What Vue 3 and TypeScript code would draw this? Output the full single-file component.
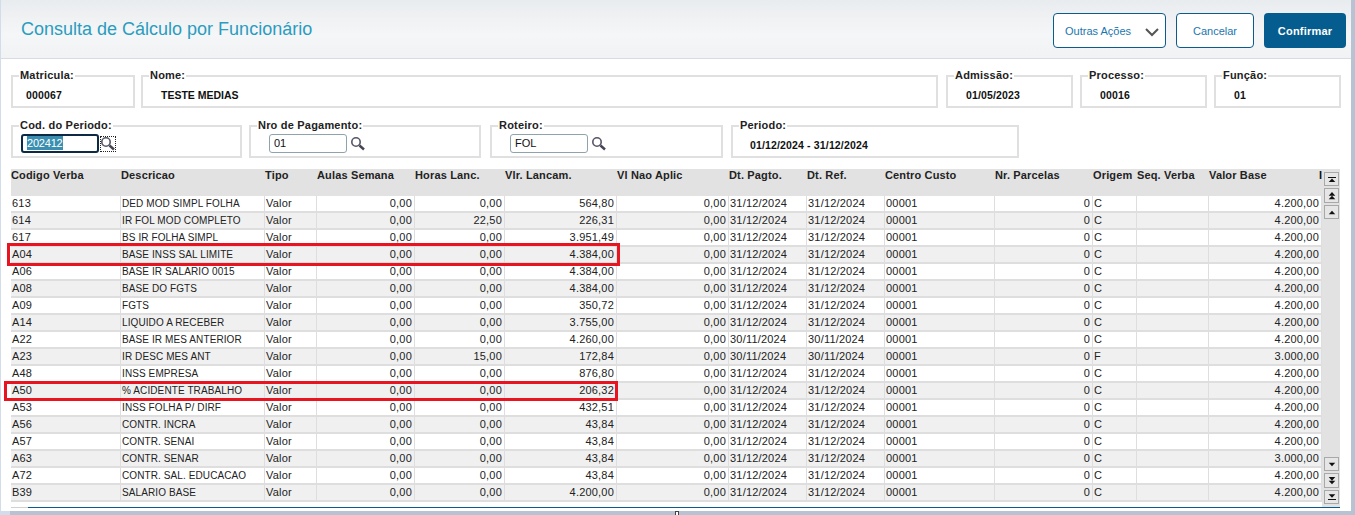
<script setup lang="ts">
const cols = [110, 144, 52, 98, 90, 112, 112, 78, 78, 110, 98, 44, 72, 113]
const heads = ['Codigo Verba','Descricao','Tipo','Aulas Semana','Horas Lanc.','Vlr. Lancam.','Vl Nao Aplic','Dt. Pagto.','Dt. Ref.','Centro Custo','Nr. Parcelas','Origem','Seq. Verba','Valor Base']
type Row = [string,string,string,string,string,string,string,string]
const rows: Row[] = [
['613','DED MOD SIMPL FOLHA','0,00','564,80','31/12/2024','31/12/2024','C','4.200,00'],
['614','IR FOL MOD COMPLETO','22,50','226,31','31/12/2024','31/12/2024','C','4.200,00'],
['617','BS IR FOLHA SIMPL','0,00','3.951,49','31/12/2024','31/12/2024','C','4.200,00'],
['A04','BASE INSS SAL LIMITE','0,00','4.384,00','31/12/2024','31/12/2024','C','4.200,00'],
['A06','BASE IR SALARIO 0015','0,00','4.384,00','31/12/2024','31/12/2024','C','4.200,00'],
['A08','BASE DO FGTS','0,00','4.384,00','31/12/2024','31/12/2024','C','4.200,00'],
['A09','FGTS','0,00','350,72','31/12/2024','31/12/2024','C','4.200,00'],
['A14','LIQUIDO A RECEBER','0,00','3.755,00','31/12/2024','31/12/2024','C','4.200,00'],
['A22','BASE IR MES ANTERIOR','0,00','4.260,00','30/11/2024','30/11/2024','C','4.200,00'],
['A23','IR DESC MES ANT','15,00','172,84','30/11/2024','30/11/2024','F','3.000,00'],
['A48','INSS EMPRESA','0,00','876,80','31/12/2024','31/12/2024','C','4.200,00'],
['A50','% ACIDENTE TRABALHO','0,00','206,32','31/12/2024','31/12/2024','C','4.200,00'],
['A53','INSS FOLHA P/ DIRF','0,00','432,51','31/12/2024','31/12/2024','C','4.200,00'],
['A56','CONTR. INCRA','0,00','43,84','31/12/2024','31/12/2024','C','4.200,00'],
['A57','CONTR. SENAI','0,00','43,84','31/12/2024','31/12/2024','C','4.200,00'],
['A63','CONTR. SENAR','0,00','43,84','31/12/2024','31/12/2024','C','3.000,00'],
['A72','CONTR. SAL. EDUCACAO','0,00','43,84','31/12/2024','31/12/2024','C','4.200,00'],
['B39','SALARIO BASE','0,00','4.200,00','31/12/2024','31/12/2024','C','4.200,00'],
]
</script>

<template>
  <div class="page">
    <div class="panel">
      <header class="top">
        <h1>Consulta de Cálculo por Funcionário</h1>
        <div class="actions">
          <button class="btn more">
            <span>Outras Ações</span>
            <svg width="14" height="9" viewBox="0 0 14 9"><path d="M1 1l6 6 6-6" fill="none" stroke="#555" stroke-width="2"/></svg>
          </button>
          <button class="btn cancel">Cancelar</button>
          <button class="btn ok">Confirmar</button>
        </div>
      </header>

      <div class="fields r1">
        <fieldset class="w-mat"><legend>Matricula:</legend><b class="v1">000067</b></fieldset>
        <fieldset class="w-nome"><legend>Nome:</legend><b class="v2">TESTE MEDIAS</b></fieldset>
        <fieldset class="w-adm"><legend>Admissão:</legend><b class="v3">01/05/2023</b></fieldset>
        <fieldset class="w-adm"><legend>Processo:</legend><b class="v3">00016</b></fieldset>
        <fieldset class="w-adm"><legend>Função:</legend><b class="v3">01</b></fieldset>
      </div>

      <div class="fields r2">
        <fieldset class="w-cod"><legend>Cod. do Periodo:</legend>
          <div class="ctl first">
            <span class="input focus"><span class="sel">202412</span></span>
            <span class="lens dotted"><svg width="16" height="15" viewBox="0 0 16 15"><circle cx="6" cy="6" r="4.2" fill="#fff" stroke="#556" stroke-width="1.6"/><path d="m9.5 9.5 4.5 4" stroke="#445" stroke-width="2.4"/></svg></span>
          </div>
        </fieldset>
        <fieldset class="w-nro"><legend>Nro de Pagamento:</legend>
          <div class="ctl second">
            <span class="input">01</span>
            <span class="lens"><svg width="16" height="15" viewBox="0 0 16 15"><circle cx="6" cy="6" r="4.2" fill="#fff" stroke="#556" stroke-width="1.6"/><path d="m9.5 9.5 4.5 4" stroke="#445" stroke-width="2.4"/></svg></span>
          </div>
        </fieldset>
        <fieldset class="w-rot"><legend>Roteiro:</legend>
          <div class="ctl third">
            <span class="input">FOL</span>
            <span class="lens"><svg width="16" height="15" viewBox="0 0 16 15"><circle cx="6" cy="6" r="4.2" fill="#fff" stroke="#556" stroke-width="1.6"/><path d="m9.5 9.5 4.5 4" stroke="#445" stroke-width="2.4"/></svg></span>
          </div>
        </fieldset>
        <fieldset class="w-per"><legend>Periodo:</legend><b class="v4">01/12/2024 - 31/12/2024</b></fieldset>
      </div>

      <div class="gridwrap">
        <div class="gridmain">
          <table>
            <colgroup><col v-for="(c, i) in cols" :key="i" :style="{ width: c + 'px' }" /></colgroup>
            <thead>
              <tr><th v-for="h in heads" :key="h">{{ h }}</th></tr>
            </thead>
            <tbody>
              <tr v-for="(r, i) in rows" :key="r[0]" :class="{ alt: i % 2 === 1 }">
                <td>{{ r[0] }}</td><td class="desc">{{ r[1] }}</td><td>Valor</td>
                <td class="n">0,00</td><td class="n">{{ r[2] }}</td><td class="n">{{ r[3] }}</td><td class="n">0,00</td>
                <td>{{ r[4] }}</td><td>{{ r[5] }}</td><td>00001</td><td class="n">0</td><td>{{ r[6] }}</td><td></td><td class="n">{{ r[7] }}</td>
              </tr>
            </tbody>
          </table>
          <div class="mark m1"></div>
          <div class="mark m2"></div>
          <div class="cut">I</div>
        </div>
        <div class="side">
          <div class="cluster">
            <span class="sb"><svg width="8" height="7" viewBox="0 0 11 9"><path d="M0 1h11v1.4H0zM5.500 3 10 8H1z" fill="#111"/></svg></span>
            <span class="sb tall"><svg width="8" height="10" viewBox="0 0 11 11"><path d="M5.500 0 10 5H1zM5.500 5 10 10H1z" fill="#111"/></svg></span>
            <span class="sb"><svg width="8" height="5" viewBox="0 0 11 7"><path d="M5.500 1 10 6H1z" fill="#111"/></svg></span>
          </div>
          <div class="cluster">
            <span class="sb"><svg width="8" height="5" viewBox="0 0 11 7"><path d="M5.500 6 10 1H1z" fill="#111"/></svg></span>
            <span class="sb tall"><svg width="8" height="10" viewBox="0 0 11 11"><path d="M5.500 5 10 0H1zM5.500 10 10 5H1z" fill="#111"/></svg></span>
            <span class="sb"><svg width="8" height="7" viewBox="0 0 11 9"><path d="M5.500 5 10 0H1zM0 6.600h11V8H0z" fill="#111"/></svg></span>
          </div>
        </div>
      </div>
      <div class="rule"><span class="rule-navy"></span></div>
    </div>
    <span class="handle"></span>
  </div>
</template>

<style>
html, body { margin: 0; background: #b9c4d4; }
</style>

<style scoped>
.page { position: relative; width: 1355px; height: 515px; overflow: hidden; background: linear-gradient(90deg, #d3dcea 0 10px, #b7c2d2 10px); padding: 0 4px 4px 1px; box-sizing: border-box; font-family: "Liberation Sans", Arial, sans-serif; color: #111; }
.panel { background: #fff; height: 511px; }
.top { height: 58px; border-bottom: 1px solid #d8dce2; background: linear-gradient(#e9ecef, #f5f6f7 60%, #f1f2f3); display: flex; justify-content: space-between; align-items: flex-start; box-sizing: content-box; }
h1 { margin: 19px 0 0 20px; font-size: 18px; line-height: 20px; font-weight: 400; color: #2a9cc0; }
.actions { display: flex; gap: 10px; padding: 13px 5px 0 0; }
.btn { height: 35px; border-radius: 4px; font: 11px "Liberation Sans", Arial, sans-serif; box-sizing: border-box; padding: 0; }
.more { width: 113px; background: #fff; border: 1px solid #0b5b8c; color: #1b76ae; display: flex; align-items: center; padding: 0 6px 0 11px; justify-content: space-between; }
.more svg { margin-top: 3px; }
.cancel { width: 78px; background: #fff; border: 1px solid #0b5b8c; color: #1b76ae; }
.ok { width: 82px; background: #055c8e; border: 0; color: #fff; font-weight: 700; letter-spacing: .2px; }

.fields { display: flex; padding-left: 10px; }
.r1 { margin-top: 10px; gap: 7px; }
.r2 { margin-top: 11px; gap: 8px; }
fieldset { margin: 0; padding: 0; border: 2px solid #e0e0e0; box-sizing: border-box; height: 39px; min-width: 0; position: relative; }
legend { font-size: 11px; line-height: 13px; font-weight: 700; padding: 0 1px; margin-left: 6px; letter-spacing: .2px; color: #222; }
fieldset b { font-size: 10.5px; font-weight: 700; letter-spacing: .15px; display: block; line-height: 13px; }
.w-mat { width: 124px; margin-right: -1px; }
.w-nome { width: 797px; margin-right: 1px; }
.w-adm { width: 127px; }
.w-cod { width: 231px; margin-right: -1px; }
.w-nro { width: 232px; margin-right: 1px; }
.w-rot { width: 233px; }
.w-per { width: 288px; }
.v1 { margin: 7px 0 0 13px; }
fieldset .v2 { margin: 7px 0 0 18px; letter-spacing: 0; }
.v3 { margin: 7px 0 0 18px; }
.v4 { margin: 7px 0 0 17px; }
.ctl { display: flex; align-items: center; margin-top: 2px; }
.first { margin-left: 8px; gap: 1px; }
.second { margin-left: 18px; gap: 3px; }
.third { margin-left: 18px; gap: 3px; }
.input { width: 78px; height: 19px; border: 1px solid #8fa3ad; border-radius: 3px; box-sizing: border-box; font-size: 11px; line-height: 17px; padding-left: 4px; background: #fff; display: block; }
.focus { border: 2px solid #0c2a45; padding-left: 4px; line-height: 15px; }
.sel { background: #3a8fb0; color: #fff; display: inline-block; line-height: 14px; letter-spacing: -.2px; }
.lens { width: 16px; height: 16px; display: flex; align-items: center; justify-content: center; box-sizing: border-box; }
.dotted { outline: 1px dotted #222; outline-offset: -1px; }

.gridwrap { display: flex; margin: 11px 11px 0 10px; height: 338px; }
.gridmain { width: 1311px; flex: none; position: relative; }
table { table-layout: fixed; border-collapse: separate; border-spacing: 0; width: 1311px; font-size: 11px; }
th { background: #e2e2e2; height: 27px; font-size: 11px; font-weight: 700; text-align: left; vertical-align: top; padding: 0; line-height: 13px; letter-spacing: .15px; white-space: nowrap; color: #222; }
td { height: 17px; box-sizing: border-box; border-bottom: 2px solid #dedede; border-right: 1px solid #dedede; padding: 0 1px; line-height: 14px; vertical-align: top; white-space: nowrap; overflow: hidden; letter-spacing: .2px; color: #222; }
td.desc { font-size: 10px; letter-spacing: .1px; line-height: 15px; }
.alt td { background: #f0f0f0; }
td.n { text-align: right; padding-right: 2px; }
.mark { position: absolute; border: 3px solid #e8141f; box-sizing: border-box; pointer-events: none; }
.m1 { left: -4px; top: 74px; width: 613px; height: 23px; }
.m2 { left: -7px; top: 212px; width: 614px; height: 20px; }
.cut { position: absolute; right: 0; top: 0; font-size: 11px; font-weight: 700; line-height: 13px; }
.side { width: 18px; flex: none; background: #e2e2e2; display: flex; flex-direction: column; justify-content: space-between; padding: 3px 1px 3px 2px; box-sizing: border-box; }
.cluster { display: flex; flex-direction: column; gap: 2px; }
.sb { width: 15px; height: 14px; border: 1px solid #a8a8a8; box-sizing: border-box; display: flex; align-items: center; justify-content: center; background: #e6e6e6; }
.tall { height: 15px; }
.rule { height: 1px; margin: 0 11px 0 10px; background: #d0d0d0; padding-left: 17px; }
.rule-navy { display: block; height: 1px; background: #0b5b8c; }
.handle { position: absolute; left: 675px; top: 511px; width: 4px; height: 5px; background: #fff; border: 1px solid #444; box-sizing: border-box; }
</style>
